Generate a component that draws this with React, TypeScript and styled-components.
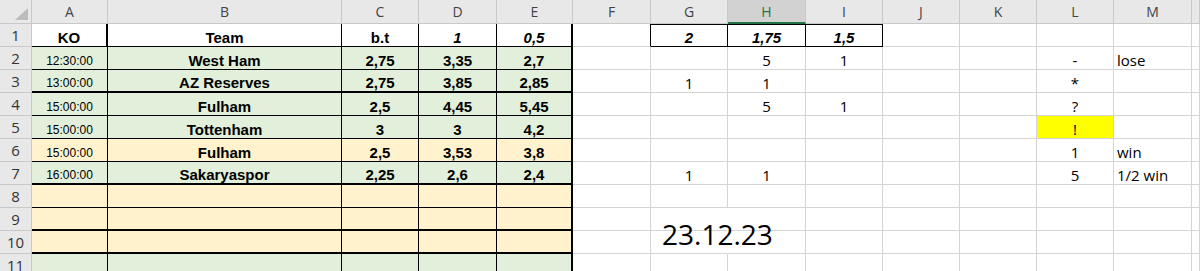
import React from "react"
import styled, { createGlobalStyle } from "styled-components"

const GRID = "#d4d4d4"
const GREEN = "#e2efda"
const BEIGE = "#fff2cc"

const GlobalStyle = createGlobalStyle`
    body {
        margin: 0;
        background: #fff;
        font-family: "Open Sans", "Liberation Sans", sans-serif;
    }
`

const Sheet = styled.div`
    display: grid;
    grid-template-columns: 32px 76px 234px 77px 78px 76px 78px 77px 78px 77px 77px 77px 77px 78px 1fr;
    grid-template-rows: 24px repeat(11, 23px);
    width: 1200px;
    height: 271px;
    overflow: hidden;
    background: #fff;
`

const Corner = styled.div`
    display: flex;
    align-items: flex-end;
    justify-content: flex-end;
    padding: 0 3px 3px 0;
    box-sizing: border-box;
    background: #e8e8e8;
    border-right: 1px solid #c8c8c8;
    border-bottom: 1px solid #c8c8c8;

    &::after {
        content: "";
        width: 0;
        height: 0;
        border-left: 13px solid transparent;
        border-bottom: 12px solid #bcbcbc;
    }
`

const ColHead = styled.div<{ $active?: boolean }>`
    display: flex;
    align-items: center;
    justify-content: center;
    box-sizing: border-box;
    background: ${p => (p.$active ? "#d2d2d2" : "#e8e8e8")};
    color: ${p => (p.$active ? "#217346" : "#444")};
    border-right: 1px solid #c8c8c8;
    border-bottom: ${p => (p.$active ? "2px solid #217346" : "1px solid #c8c8c8")};
    font: 400 14px/1 "Open Sans", sans-serif;
    padding-top: 1px;
`

const RowHead = styled.div`
    display: flex;
    align-items: center;
    justify-content: center;
    box-sizing: border-box;
    background: #e8e8e8;
    color: #333;
    border-right: 1px solid #c8c8c8;
    border-bottom: 1px solid #c8c8c8;
    font: 400 15px/1 "Open Sans", sans-serif;
`

type Kind = "bold" | "time" | "plain" | "date"

const fonts: Record<Kind, string> = {
    bold: `700 15px/17px "Liberation Sans", Arial, sans-serif`,
    time: `400 12px/16px "Liberation Sans", Arial, sans-serif`,
    plain: `400 15px/17px "Open Sans", sans-serif`,
    date: `400 28px/38px "Open Sans", sans-serif`,
}

const Cell = styled.div<{
    $kind: Kind
    $italic?: boolean
    $align: string
    $fill?: string
    $rw: number
    $rc: string
    $bw: number
    $bc: string
    $top?: boolean
}>`
    display: flex;
    align-items: flex-end;
    justify-content: ${p => p.$align};
    padding: 0 ${p => (p.$kind === "date" ? "0 0 11px" : "3px")};
    box-sizing: border-box;
    min-width: 0;
    white-space: nowrap;
    color: #000;
    background: ${p => p.$fill ?? "transparent"};
    border-right: ${p => p.$rw}px solid ${p => p.$rc};
    border-bottom: ${p => p.$bw}px solid ${p => p.$bc};
    box-shadow: ${p => (p.$top ? "inset 0 1px 0 #000" : "none")};
    font: ${p => fonts[p.$kind]};
    font-style: ${p => (p.$italic ? "italic" : "normal")};
`

const COLS = ["A", "B", "C", "D", "E", "F", "G", "H", "I", "J", "K", "L", "M", ""]

type Spec = { text?: string; kind?: Kind; italic?: boolean; fill?: string; align?: string }

const games = [
    { ko: "12:30:00", team: "West Ham", odds: ["2,75", "3,35", "2,7"], fill: GREEN },
    { ko: "13:00:00", team: "AZ Reserves", odds: ["2,75", "3,85", "2,85"], fill: GREEN },
    { ko: "15:00:00", team: "Fulham", odds: ["2,5", "4,45", "5,45"], fill: GREEN },
    { ko: "15:00:00", team: "Tottenham", odds: ["3", "3", "4,2"], fill: GREEN },
    { ko: "15:00:00", team: "Fulham", odds: ["2,5", "3,53", "3,8"], fill: BEIGE },
    { ko: "16:00:00", team: "Sakaryaspor", odds: ["2,25", "2,6", "2,4"], fill: GREEN },
]

// right side (G..M) of rows 1..11
const side: Record<number, Record<string, Spec>> = {
    1: {
        G: { text: "2", kind: "bold", italic: true },
        H: { text: "1,75", kind: "bold", italic: true },
        I: { text: "1,5", kind: "bold", italic: true },
    },
    2: { H: { text: "5" }, I: { text: "1" }, L: { text: "-" }, M: { text: "lose", align: "flex-start" } },
    3: { G: { text: "1" }, H: { text: "1" }, L: { text: "*" } },
    4: { H: { text: "5" }, I: { text: "1" }, L: { text: "?" } },
    5: { L: { text: "!", fill: "#ffff00" } },
    6: { L: { text: "1" }, M: { text: "win", align: "flex-start" } },
    7: { G: { text: "1" }, H: { text: "1" }, L: { text: "5" }, M: { text: "1/2 win", align: "flex-start" } },
    10: { G: { text: "23.12.23", kind: "date", align: "flex-start" } },
}

const thickBottom = [3, 7, 9, 10]

function tableRow(r: number): Spec[] {
    if (r === 1) {
        return [
            { text: "KO", kind: "bold" },
            { text: "Team", kind: "bold" },
            { text: "b.t", kind: "bold" },
            { text: "1", kind: "bold", italic: true },
            { text: "0,5", kind: "bold", italic: true },
        ]
    }
    const g = games[r - 2]
    if (g) {
        return [
            { text: g.ko, kind: "time", fill: g.fill },
            { text: g.team, kind: "bold", fill: g.fill },
            ...g.odds.map(o => ({ text: o, kind: "bold" as Kind, fill: g.fill })),
        ]
    }
    const fill = r === 11 ? GREEN : BEIGE
    return [0, 1, 2, 3, 4].map(() => ({ fill }))
}

function renderRow(r: number) {
    const left = tableRow(r)
    return COLS.map((col, i) => {
        const inTable = i < 5
        const spec: Spec = inTable ? left[i] : side[r]?.[col] ?? {}
        let rw = 1
        let rc = GRID
        let bw = 1
        let bc = GRID
        let top = false
        if (inTable) {
            rc = "#000"
            bc = "#000"
            if (i === 4 || (r === 1 && i === 0)) rw = 2
            if (thickBottom.includes(r)) bw = 2
        }
        if (r === 1 && ["F", "G", "H", "I"].includes(col)) rc = "#000"
        if (r === 1 && ["G", "H", "I"].includes(col)) {
            bc = "#000"
            top = true
        }
        if (col === "G" && (r === 9 || r === 10)) rc = "transparent"
        return (
            <Cell
                key={col + r + i}
                $kind={spec.kind ?? "plain"}
                $italic={spec.italic}
                $align={spec.align ?? "center"}
                $fill={spec.fill ?? (r === 1 && inTable ? "#fff" : undefined)}
                $rw={rw}
                $rc={rc}
                $bw={bw}
                $bc={bc}
                $top={top}
            >
                {spec.text}
            </Cell>
        )
    })
}

export default function App() {
    const rows = Array.from({ length: 11 }, (_, i) => i + 1)
    return (
        <>
            <GlobalStyle />
            <Sheet>
                <Corner />
                {COLS.map((c, i) => (
                    <ColHead key={"h" + i} $active={c === "H"}>
                        {c}
                    </ColHead>
                ))}
                {rows.map(r => (
                    <React.Fragment key={r}>
                        <RowHead>{r}</RowHead>
                        {renderRow(r)}
                    </React.Fragment>
                ))}
            </Sheet>
        </>
    )
}
